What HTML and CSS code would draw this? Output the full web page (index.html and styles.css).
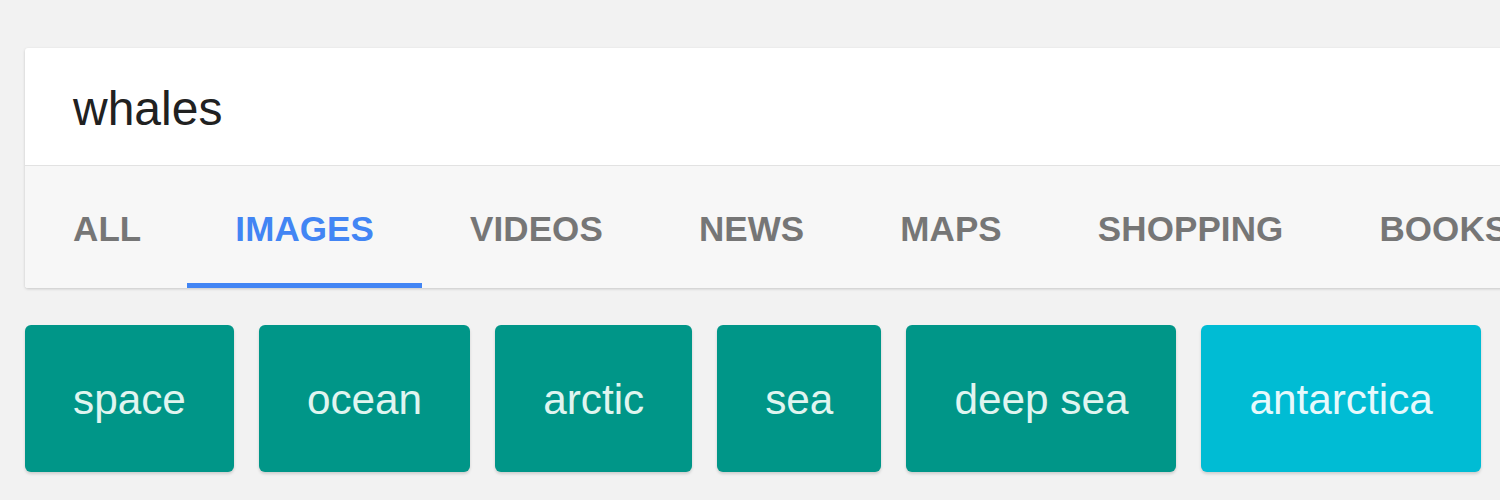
FILE: index.html
```html
<!DOCTYPE html>
<html>
<head>
<meta charset="utf-8">
<link rel="stylesheet" href="styles.css">
</head>
<body>
<div class="page">
  <div class="card">
    <div class="search">whales</div>
    <nav class="tabs">
      <div class="tab">ALL</div>
      <div class="tab active">IMAGES</div>
      <div class="tab">VIDEOS</div>
      <div class="tab">NEWS</div>
      <div class="tab">MAPS</div>
      <div class="tab">SHOPPING</div>
      <div class="tab">BOOKS</div>
    </nav>
  </div>
  <div class="chips">
    <div class="chip">space</div>
    <div class="chip">ocean</div>
    <div class="chip">arctic</div>
    <div class="chip">sea</div>
    <div class="chip">deep sea</div>
    <div class="chip chip-alt">antarctica</div>
  </div>
</div>
</body>
</html>
```
FILE: styles.css
```css
html, body {
  margin: 0;
  padding: 0;
  background: #f2f2f2;
  overflow: hidden;
  width: 1500px;
  height: 500px;
}
.page {
  padding: 48px 0 0 25px;
  font-family: "Liberation Sans", Arial, sans-serif;
}
.card {
  width: 1560px;
  background: #fff;
  border-radius: 3px 0 0 3px;
  box-shadow: 0 1px 3px rgba(0,0,0,0.18);
}
.search {
  height: 118px;
  box-sizing: border-box;
  padding: 5px 0 0 48px;
  display: flex;
  align-items: center;
  font-size: 48px;
  line-height: 1;
  color: #212121;
  border-bottom: 1px solid #e2e2e2;
}
.tabs {
  display: flex;
  height: 122px;
  background: #f7f7f7;
  border-radius: 0 0 0 3px;
  white-space: nowrap;
}
.tab {
  display: flex;
  align-items: center;
  padding: 7px 48px 0;
  font-size: 35px;
  font-weight: bold;
  line-height: 1;
  color: #767676;
  box-sizing: border-box;
  border-bottom: 5px solid transparent;
  letter-spacing: 0.1px;
}
.tab:first-child {
  padding-right: 46px;
}
.tab.active {
  color: #4285f4;
  border-bottom-color: #4285f4;
}
.chips {
  display: flex;
  gap: 25px;
  margin-top: 37px;
  white-space: nowrap;
}
.chip {
  height: 147px;
  box-sizing: border-box;
  padding: 4px 48px 0;
  display: flex;
  align-items: center;
  background: #009688;
  color: #e0f5f0;
  font-size: 42.3px;
  line-height: 1;
  border-radius: 6px;
  box-shadow: 0 2px 3px rgba(0,0,0,0.15);
}
.chip-alt {
  background: #00bcd4;
  color: #e6f9fc;
}
```
